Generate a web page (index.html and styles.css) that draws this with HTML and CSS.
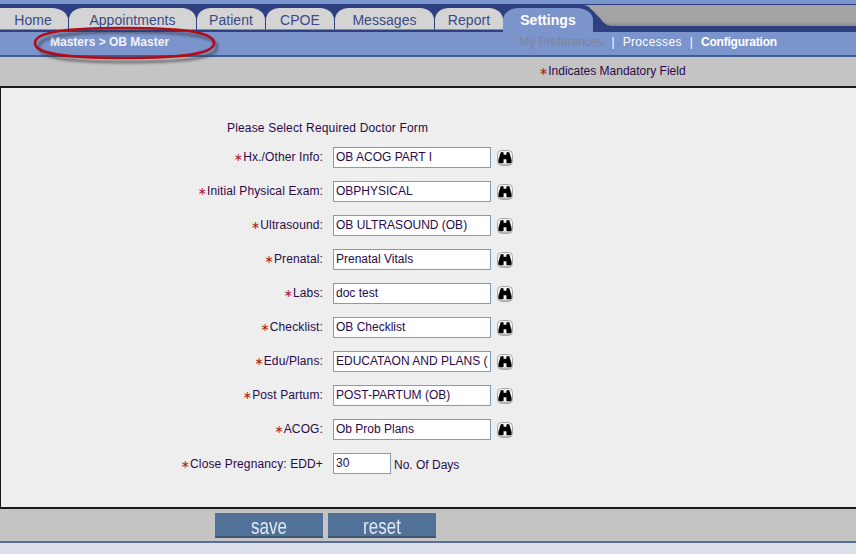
FILE: index.html

```html
<!DOCTYPE html>
<html lang="en">
<head>
  <meta charset="UTF-8" />
  <title>OB Master</title>
  <link rel="stylesheet" href="styles.css">
</head>
<body>
  <svg width="0" height="0" class="defs">
    <symbol id="binoculars" viewBox="0 0 16 16">
      <rect x="0.5" y="0.5" width="15" height="15" rx="4" fill="#f6f6f6" stroke="#a8a8a8"/>
      <rect x="1" y="13.5" width="14" height="1.5" rx="0.7" fill="#b8b8b8"/>
      <path d="M3.6 2.4q1.6-0.9 3 0v2.3h2.8V2.4q1.4-0.9 3 0l2.2 7.6v2.7q-2.6 1-5.2 0V9.2H6.6v3.5q-2.6 1-5.2 0V10z" fill="#000"/>
    </symbol>
    <filter id="soft" x="-10%" y="-30%" width="120%" height="160%">
      <feGaussianBlur stdDeviation="1.3"/>
    </filter>
  </svg>

  <div class="top-strip"></div>
  <nav class="tabs">
    <a class="tab tab-home">Home</a>
    <a class="tab tab-appts">Appointments</a>
    <a class="tab tab-small">Patient</a>
    <a class="tab tab-small">CPOE</a>
    <a class="tab tab-msgs">Messages</a>
    <a class="tab tab-small">Report</a>
    <a class="tab tab-active">Settings</a>
    <svg class="tabs-rest" width="273" height="28" viewBox="0 0 273 28">
      <defs>
        <linearGradient id="restfill" x1="0" y1="0" x2="0" y2="1">
          <stop offset="0" stop-color="#a6a6a6"/>
          <stop offset="0.8" stop-color="#a2a2a2"/>
          <stop offset="1" stop-color="#8a8a8a"/>
        </linearGradient>
      </defs>
      <path d="M0 1C5 1 7 4 9 6C12 9 14 11 17 14C20 18 23 22 29 22H273V1z" fill="url(#restfill)"/>
    </svg>
  </nav>

  <div class="subbar">
    <span class="crumb">Masters &gt; OB Master</span>
    <div class="subnav">
      <span class="disabled">My Preferences</span>
      <span>|</span>
      <span class="link">Processes</span>
      <span>|</span>
      <span class="current">Configuration</span>
    </div>
  </div>
  <svg class="circle" width="200" height="48" viewBox="0 0 200 48">
    <path d="M13 21C13 11 37 6 102 6S191 11 191 21S167 36 102 36S13 31 13 21z" fill="none" stroke="#3c3c46" stroke-opacity="0.55" stroke-width="3" filter="url(#soft)"/>
    <path d="M9 17C9 7 33 2 98 2S188 7 188 17S163 32 98 32S9 27 9 17z" fill="none" stroke="#b00d14" stroke-width="2.6"/>
  </svg>

  <div class="notice"><span class="star">∗</span>Indicates Mandatory Field</div>

  <main class="panel">
    <p class="form-title">Please Select Required Doctor Form</p>
    <form class="form">
      <label class="lbl"><span class="star">∗</span>Hx./Other Info:</label>
      <div class="field"><input type="text" value="OB ACOG PART I"><svg class="find"><use href="#binoculars"/></svg></div>

      <label class="lbl"><span class="star">∗</span>Initial Physical Exam:</label>
      <div class="field"><input type="text" value="OBPHYSICAL"><svg class="find"><use href="#binoculars"/></svg></div>

      <label class="lbl"><span class="star">∗</span>Ultrasound:</label>
      <div class="field"><input type="text" value="OB ULTRASOUND (OB)"><svg class="find"><use href="#binoculars"/></svg></div>

      <label class="lbl"><span class="star">∗</span>Prenatal:</label>
      <div class="field"><input type="text" value="Prenatal Vitals"><svg class="find"><use href="#binoculars"/></svg></div>

      <label class="lbl"><span class="star">∗</span>Labs:</label>
      <div class="field"><input type="text" value="doc test"><svg class="find"><use href="#binoculars"/></svg></div>

      <label class="lbl"><span class="star">∗</span>Checklist:</label>
      <div class="field"><input type="text" value="OB Checklist"><svg class="find"><use href="#binoculars"/></svg></div>

      <label class="lbl"><span class="star">∗</span>Edu/Plans:</label>
      <div class="field"><input type="text" value="EDUCATAON AND PLANS (OB)"><svg class="find"><use href="#binoculars"/></svg></div>

      <label class="lbl"><span class="star">∗</span>Post Partum:</label>
      <div class="field"><input type="text" value="POST-PARTUM (OB)"><svg class="find"><use href="#binoculars"/></svg></div>

      <label class="lbl"><span class="star">∗</span>ACOG:</label>
      <div class="field"><input type="text" value="Ob Prob Plans"><svg class="find"><use href="#binoculars"/></svg></div>

      <label class="lbl lbl-last"><span class="star">∗</span>Close Pregnancy: EDD+</label>
      <div class="field"><input class="short" type="text" value="30"><span class="days">No. Of Days</span></div>
    </form>
  </main>

  <div class="actions">
    <button type="button"><span class="btn-text">save</span></button>
    <button type="button"><span class="btn-text">reset</span></button>
  </div>
  <div class="bottom"></div>
</body>
</html>
```

FILE: styles.css

```css
html, body {
  margin: 0;
  padding: 0;
}
body {
  font-family: "Liberation Sans", Arial, sans-serif;
  font-size: 12px;
  color: #2a0a4a;
  background: #dce0ea;
  width: 856px;
  height: 554px;
  overflow: hidden;
  position: relative;
}
.defs {
  position: absolute;
}
.top-strip {
  height: 4px;
  background: #7a94cc;
}
.tabs {
  display: flex;
  height: 28px;
  background: #2e3f82;
  align-items: flex-end;
}
.tab {
  box-sizing: border-box;
  width: 69px;
  height: 22px;
  margin-bottom: 2px;
  background: #d4d4d4;
  color: #3a4a86;
  font-size: 14px;
  letter-spacing: 0.05px;
  text-align: center;
  line-height: 24px;
  border-radius: 14px 14px 0 0 / 12px 12px 0 0;
  border-left: 1px solid #2e3f82;
  border-bottom: 1px solid #8c8c8c;
}
.tab-home {
  width: 68px;
  border-radius: 0 16px 0 0 / 0 12px 0 0;
  border-left: 0;
  padding-right: 2px;
}
.tab-appts {
  width: 128px;
}
.tab-msgs {
  width: 100px;
}
.tab-active {
  position: relative;
  width: 90px;
  height: 24px;
  margin-bottom: 0;
  background: #7b94cc;
  color: #fff;
  font-weight: bold;
  border-left: 0;
  border-bottom: 0;
  line-height: 25px;
  border-radius: 16px 16px 0 0 / 12px 12px 0 0;
}
.tabs-rest {
  align-self: flex-start;
  margin-left: -10px;
  flex: none;
}
.subbar {
  box-sizing: border-box;
  height: 25px;
  background: #7b94cc;
  border-bottom: 2px solid #3f5c92;
  display: flex;
  justify-content: space-between;
  padding-top: 3px;
  color: #fff;
}
.crumb {
  margin-left: 50px;
  font-weight: bold;
  color: #f2f2fa;
}
.subnav {
  display: flex;
  gap: 8px;
  margin-right: 79px;
}
.subnav .disabled {
  color: #7f8498;
}
.subnav .link {
  letter-spacing: 0.35px;
}
.subnav .current {
  font-weight: bold;
  letter-spacing: -0.2px;
}
.circle {
  position: absolute;
  left: 26px;
  top: 26px;
}
.notice {
  height: 29px;
  box-sizing: border-box;
  background: #c4c4c4;
  padding: 7px 0 0 539px;
}
.star {
  font-family: "DejaVu Sans", sans-serif;
  font-size: 11px;
  line-height: 12px;
  color: #b01818;
}
.panel {
  box-sizing: border-box;
  height: 423px;
  background: #eeeeee;
  border-top: 2px solid #1a1a1a;
  border-bottom: 2px solid #1a1a1a;
  border-left: 1px solid #1a1a1a;
  padding-top: 33px;
}
.form-title {
  margin: 0 0 0 226px;
  height: 14px;
  letter-spacing: 0.17px;
}
.form {
  display: grid;
  grid-template-columns: 322px 1fr;
  grid-auto-rows: 34px;
  column-gap: 10px;
  align-items: center;
  margin-top: 5px;
}
.lbl {
  text-align: right;
  letter-spacing: 0.12px;
}
.lbl-last {
  padding-top: 2px;
}
.field {
  display: flex;
  align-items: center;
}
input {
  box-sizing: border-box;
  width: 158px;
  height: 21px;
  border: 1px solid #7f9db9;
  background: #fff;
  padding: 0 2px;
  font-family: inherit;
  font-size: 12px;
  color: #2a0a4a;
}
input.short {
  width: 58px;
}
.find {
  width: 16px;
  height: 16px;
  margin: 2px 0 0 6px;
}
.days {
  margin-left: 3px;
  padding-top: 4px;
}
.actions {
  box-sizing: border-box;
  height: 34px;
  background: #c4c4c4;
  border-bottom: 2px solid #5a6f98;
  padding: 4px 0 0 215px;
  display: flex;
  gap: 5px;
}
button {
  width: 108px;
  height: 25px;
  border: 0;
  border-bottom: 2px solid #3f5672;
  background: #517198;
  color: #dfe9f5;
  font-family: inherit;
  font-size: 17px;
  line-height: 25px;
  padding: 2px 0 0;
}
.btn-text {
  display: inline-block;
  transform: scaleY(1.25);
}
.bottom {
  height: 11px;
}
```
